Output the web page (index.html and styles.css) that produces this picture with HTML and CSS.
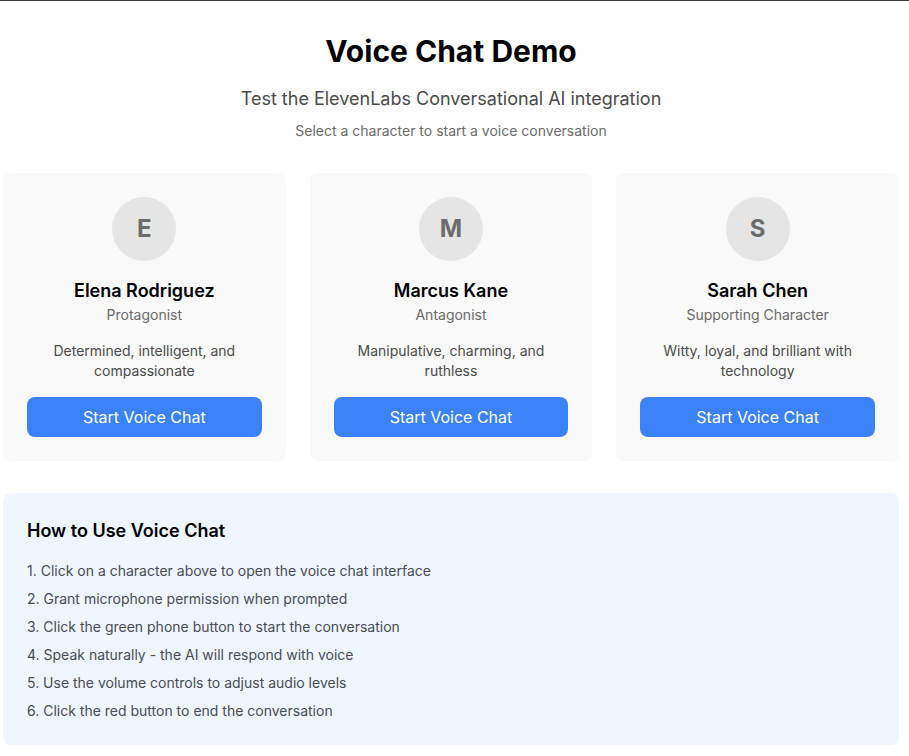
FILE: index.html
```html
<!DOCTYPE html>
<html lang="en">
<head>
    <meta charset="UTF-8">
    <title>Voice Chat Demo</title>
    <link rel="stylesheet" href="styles.css">
</head>
<body>
<div class="page">
    <div class="header">
        <h1>Voice Chat Demo</h1>
        <p class="subtitle">Test the ElevenLabs Conversational AI integration</p>
        <p class="hint">Select a character to start a voice conversation</p>
    </div>

    <!--角色卡片-->
    <div class="characters">
        <div class="card">
            <div class="avatar">E</div>
            <h3 class="name">Elena Rodriguez</h3>
            <p class="role">Protagonist</p>
            <p class="desc">Determined, intelligent, and compassionate</p>
            <button class="start-btn">Start Voice Chat</button>
        </div>
        <div class="card">
            <div class="avatar">M</div>
            <h3 class="name">Marcus Kane</h3>
            <p class="role">Antagonist</p>
            <p class="desc">Manipulative, charming, and ruthless</p>
            <button class="start-btn">Start Voice Chat</button>
        </div>
        <div class="card">
            <div class="avatar">S</div>
            <h3 class="name">Sarah Chen</h3>
            <p class="role">Supporting Character</p>
            <p class="desc">Witty, loyal, and brilliant with technology</p>
            <button class="start-btn">Start Voice Chat</button>
        </div>
    </div>

    <!--使用说明-->
    <div class="help">
        <h3>How to Use Voice Chat</h3>
        <ol>
            <li>1. Click on a character above to open the voice chat interface</li>
            <li>2. Grant microphone permission when prompted</li>
            <li>3. Click the green phone button to start the conversation</li>
            <li>4. Speak naturally - the AI will respond with voice</li>
            <li>5. Use the volume controls to adjust audio levels</li>
            <li>6. Click the red button to end the conversation</li>
        </ol>
    </div>
</div>
</body>
</html>
```

FILE: styles.css
```css
* {
    padding: 0;
    margin: 0;
    list-style: none;
    border: 0;
    box-sizing: border-box;
}

body {
    font-family: Inter, "Liberation Sans", sans-serif;
    background: #fff;
    color: #111;
    border-top: 1px solid #3a3a3a;
}

.page {
    width: 896px;
    margin-left: 3px;
    padding: 32px 0 24px;
}

.header {
    text-align: center;
    margin-bottom: 32px;
}

.header h1 {
    font-size: 30px;
    line-height: 36px;
    font-weight: 700;
    color: #000;
    margin-bottom: 16px;
}

.subtitle {
    font-size: 18px;
    line-height: 28px;
    color: #4b4b4b;
    margin-bottom: 8px;
}

.hint {
    font-size: 14px;
    line-height: 20px;
    color: #6b6b6b;
}

.characters {
    display: grid;
    grid-template-columns: repeat(3, 1fr);
    gap: 24px;
    margin-bottom: 32px;
}

.card {
    background: #f9f9f9;
    border-radius: 8px;
    padding: 24px;
    text-align: center;
    display: flex;
    flex-direction: column;
    align-items: center;
}

.avatar {
    width: 64px;
    height: 64px;
    border-radius: 50%;
    background: #e5e5e5;
    color: #6b6b6b;
    font-size: 24px;
    font-weight: 700;
    line-height: 64px;
    margin-bottom: 16px;
}

.name {
    font-size: 18px;
    line-height: 28px;
    font-weight: 600;
    color: #000;
}

.role {
    font-size: 14px;
    line-height: 20px;
    color: #6b6b6b;
    margin-bottom: 16px;
}

.desc {
    font-size: 14px;
    line-height: 20px;
    color: #4b4b4b;
    margin-bottom: 16px;
}

.start-btn {
    width: 100%;
    height: 40px;
    background: #3b82f6;
    color: #fff;
    border-radius: 8px;
    font-family: inherit;
    font-size: 16px;
    line-height: 24px;
    cursor: pointer;
}

.help {
    background: #eff6ff;
    border-radius: 8px;
    padding: 24px;
}

.help h3 {
    font-size: 18px;
    line-height: 28px;
    font-weight: 600;
    color: #000;
    margin-bottom: 16px;
}

.help li {
    font-size: 14px;
    line-height: 20px;
    color: #4b4b55;
    margin-bottom: 8px;
}

.help li:last-child {
    margin-bottom: 0;
}
```
